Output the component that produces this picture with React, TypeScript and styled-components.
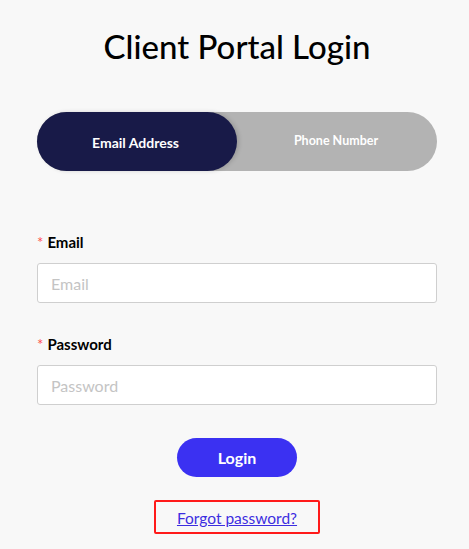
import styled, { createGlobalStyle } from "styled-components";
import { useState } from "react";

const GlobalStyle = createGlobalStyle`
  html, body {
    margin: 0;
    background: #f8f8f8;
  }
  body {
    font-family: "Lato", "Noto Sans", sans-serif;
  }
`;

const Page = styled.div`
  width: 400px;
  margin: 0 0 0 37px;
  padding-top: 26px;
  display: flex;
  flex-direction: column;
  align-items: stretch;
`;

const Title = styled.h1`
  margin: 0;
  text-align: center;
  font-family: "Lato", sans-serif;
  font-weight: 500;
  font-size: 33px;
  line-height: 41px;
  color: #000;
`;

const Toggle = styled.div`
  margin-top: 45px;
  display: grid;
  grid-template-columns: 1fr 1fr;
  height: 59px;
  border-radius: 30px;
  background: #b3b3b3;
`;

const Tab = styled.button<{ $active?: boolean }>`
  border: none;
  border-radius: 30px;
  cursor: pointer;
  font-family: "Lato", sans-serif;
  font-weight: 700;
  color: #fff;
  background: ${(p) => (p.$active ? "#181a48" : "transparent")};
  font-size: ${(p) => (p.$active ? "14px" : "12.5px")};
  padding-bottom: ${(p) => (p.$active ? "0" : "3px")};
  padding-left: ${(p) => (p.$active ? "3px" : "4px")};
  box-shadow: ${(p) => (p.$active ? "2px 0 4px rgba(0,0,0,0.15)" : "none")};
`;

const Form = styled.form`
  margin-top: 62px;
  display: flex;
  flex-direction: column;
`;

const Field = styled.div`
  display: flex;
  flex-direction: column;
  gap: 11px;
  margin-bottom: 32px;
`;

const Label = styled.label`
  font-size: 15px;
  font-weight: 700;
  color: #000;
  line-height: 19px;

  &::before {
    content: "*";
    color: #ff4d4f;
    margin-right: 4px;
    font-weight: 400;
  }
`;

const Input = styled.input`
  box-sizing: border-box;
  height: 40px;
  width: 100%;
  border: 1px solid #cfcfcf;
  border-radius: 3px;
  background: #fff;
  padding: 0 13px;
  font-family: "Lato", sans-serif;
  font-size: 16px;
  outline: none;

  &::placeholder {
    color: #c4c4c4;
  }
`;

const LoginButton = styled.button`
  align-self: center;
  margin-top: 1px;
  width: 120px;
  height: 39px;
  border: none;
  border-radius: 20px;
  background: #3b31f2;
  color: #fff;
  font-family: "Lato", sans-serif;
  font-weight: 700;
  font-size: 16px;
  cursor: pointer;
`;

const ForgotBox = styled.div`
  align-self: center;
  margin-top: 23px;
  width: 166px;
  height: 34px;
  box-sizing: border-box;
  border: 2px solid #ff1a1a;
  border-radius: 2px;
  display: flex;
  align-items: center;
  justify-content: center;
  padding-top: 2px;
`;

const ForgotLink = styled.a`
  color: #3c2ee0;
  font-size: 15.5px;
  text-decoration: underline;
  cursor: pointer;
`;

export default function App() {
  const [mode, setMode] = useState<"email" | "phone">("email");

  return (
    <>
      <GlobalStyle />
      <Page>
        <Title>Client Portal Login</Title>
        <Toggle>
          <Tab $active={mode === "email"} onClick={() => setMode("email")}>
            Email Address
          </Tab>
          <Tab $active={mode === "phone"} onClick={() => setMode("phone")}>
            Phone Number
          </Tab>
        </Toggle>
        <Form onSubmit={(e) => e.preventDefault()}>
          <Field>
            <Label>Email</Label>
            <Input placeholder="Email" />
          </Field>
          <Field>
            <Label>Password</Label>
            <Input type="password" placeholder="Password" />
          </Field>
          <LoginButton type="submit">Login</LoginButton>
          <ForgotBox>
            <ForgotLink>Forgot password?</ForgotLink>
          </ForgotBox>
        </Form>
      </Page>
    </>
  );
}
